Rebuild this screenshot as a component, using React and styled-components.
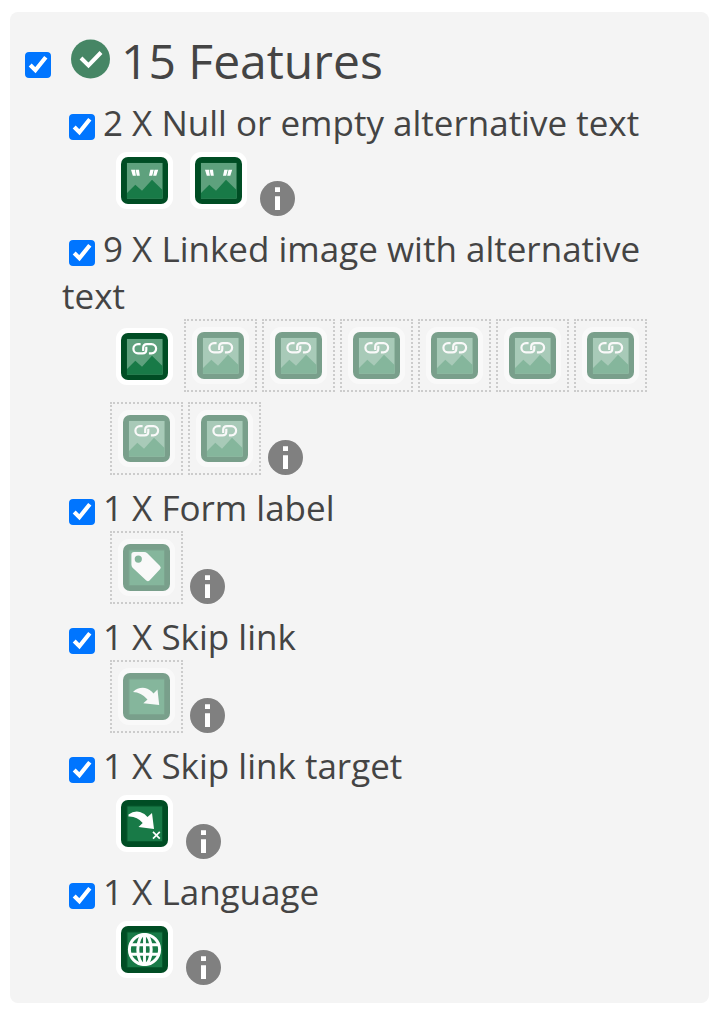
import React from "react";
import styled, { createGlobalStyle } from "styled-components";

const GlobalStyle = createGlobalStyle`
  * { box-sizing: border-box; }
  body {
    margin: 0;
    background: #fff;
    color: #444;
    font-family: "Open Sans", "Liberation Sans", sans-serif;
    font-size: 35px;
    line-height: 47px;
  }
`;

const Panel = styled.section`
  margin: 12px 7px 6px 10px;
  padding: 15px 14px 9px 15px;
  background: #f4f4f4;
  border-radius: 8px;
`;

const Heading = styled.h3`
  margin: 0 0 4px;
  font-size: 48px;
  font-weight: 400;
  line-height: 68px;
`;

const Checkbox = styled.input`
  width: 26px;
  height: 26px;
  margin: 0;
  vertical-align: ${(p) => (p.$heading ? "1px" : "-4px")};
  margin-left: ${(p) => (p.$heading ? "0" : "7px")};
  margin-right: ${(p) => (p.$heading ? "20px" : "8px")};
  clip-path: inset(0 round 4px);
`;

const StatusIcon = styled.svg`
  width: 40px;
  height: 40px;
  margin-right: 10px;
  vertical-align: 0;
`;

const Types = styled.ul`
  margin: 0;
  padding: 0 0 0 37px;
  list-style: none;
`;

const TypeLabel = styled.label`
  display: block;
`;

const Icons = styled.div`
  display: flex;
  flex-wrap: wrap;
  align-items: flex-end;
  gap: 10px 5px;
  padding: 0 0 9px 48px;
`;

const IconButton = styled.button`
  display: block;
  padding: ${(p) => (p.$hidden ? "6px" : "6px 6px 7px")};
  border: ${(p) => (p.$hidden ? "2px dotted #ccc" : "0")};
  background: none;
  cursor: pointer;
`;

const TileSvg = styled.svg`
  display: block;
  width: 57px;
  height: 57px;
  opacity: ${(p) => (p.$hidden ? 0.5 : 1)};
`;

const InfoButton = styled.button`
  display: block;
  width: 35px;
  height: 35px;
  margin-left: 2px;
  padding: 0;
  border: 0;
  background: none;
  cursor: pointer;
`;

const Landscape = () => (
  <>
    <path d="M11 11H46.500V46.500H11Z" fill="#5ea17d" />
    <path d="M11 41L19.300 32.700L26 38.700L36 27.700L46.500 38V46.500H11Z" fill="#187a47" />
  </>
);

const glyphs = {
  nullAlt: (
    <>
      <Landscape />
      <path
        d="M15 17.700H19L19.900 23.700H16.800ZM19.600 17.700H23L23.800 23.700H20.800ZM34.300 17.700H37.800L36.200 23.700H33ZM38.500 17.700H42.200L40.300 23.700H37.200Z"
        fill="#fff"
      />
    </>
  ),
  linkedImage: (
    <>
      <Landscape />
      <path
        d="M23.500 16.200H22a4.600 4.600 0 0 0 0 9.200H26.500Q30.300 25.400 30.300 21.800V19.800M34 25.400H35.500a4.600 4.600 0 0 0 0-9.200H31Q27.200 16.200 27.200 19.800V21.800"
        fill="none"
        stroke="#fff"
        strokeWidth="2.200"
        strokeLinecap="square"
      />
    </>
  ),
  label: (
    <path
      fillRule="evenodd"
      d="M16 13H26Q28 13 29.300 14.300L42 27Q43.600 28.700 42 30.300L31.500 41.500Q30 43 28.300 41.500L14.600 28.700Q13.400 27.500 13.400 25.500V15.500Q13.400 13 16 13ZM20.300 16.500a3.600 3.600 0 1 0 0 7.200a3.600 3.600 0 1 0 0-7.200Z"
      fill="#fff"
    />
  ),
  skip: (
    <path
      d="M15 24Q20 19 27 20Q32 21 35.500 25.500L39.500 21.500L41.200 37L25.300 35.300L29.500 31.500Q23 24 15 24Z"
      fill="#fff"
    />
  ),
  skipTarget: (
    <>
      <path
        d="M12.500 19.500Q18 15.500 24 17Q29 18.500 31.500 22L36 18L38 34L22.500 32L26.700 28Q21 21 12.500 21.500Z"
        fill="#fff"
      />
      <path d="M37 36.800L43.800 43.600M43.800 36.800L37 43.600" stroke="#fff" strokeWidth="1.700" />
    </>
  ),
  language: (
    <g fill="none" stroke="#fff" strokeWidth="3">
      <circle cx="28.500" cy="28.500" r="15.100" />
      <ellipse cx="28.500" cy="28.500" rx="6.700" ry="15.100" />
      <path d="M28.500 13.300V43.700M14.500 23.700H42.500M14.500 33.300H42.500" strokeWidth="2.900" />
    </g>
  ),
};

const Tile = ({ kind, hidden, name }) => (
  <IconButton type="button" $hidden={hidden} aria-label={name}>
    <TileSvg viewBox="0 0 57 57" $hidden={hidden} aria-hidden="true">
      <rect width="57" height="57" rx="11" fill="#fff" />
      <rect x="5" y="5" width="47" height="47" rx="7" fill="#004d24" />
      <rect x="10.500" y="10.500" width="36.500" height="36.500" rx="1" fill="#06592d" />
      <rect x="11.500" y="11.500" width="34.500" height="34.500" fill="#187a47" />
      {glyphs[kind]}
    </TileSvg>
  </IconButton>
);

const Info = ({ name }) => (
  <InfoButton type="button" aria-label={`${name} information`}>
    <svg width="35" height="35" viewBox="0 0 35 35" aria-hidden="true">
      <circle cx="17.500" cy="17.500" r="17.500" fill="#808080" />
      <path d="M15 6.300H20V11H15ZM15 15.300H20V29H15Z" fill="#fff" />
    </svg>
  </InfoButton>
);

const features = [
  { name: "Null or empty alternative text", kind: "nullAlt", hidden: [false, false] },
  {
    name: "Linked image with alternative text",
    kind: "linkedImage",
    hidden: [false, true, true, true, true, true, true, true, true],
  },
  { name: "Form label", kind: "label", hidden: [true] },
  { name: "Skip link", kind: "skip", hidden: [true] },
  { name: "Skip link target", kind: "skipTarget", hidden: [false] },
  { name: "Language", kind: "language", hidden: [false] },
];

export default function App() {
  return (
    <>
      <GlobalStyle />
      <Panel>
        <Heading>
          <Checkbox id="all-features" type="checkbox" defaultChecked $heading />
          <label htmlFor="all-features">
            <StatusIcon viewBox="0 0 40 40" aria-hidden="true">
              <circle cx="19.500" cy="20" r="19.500" fill="#468665" />
              <path d="M10 19L17.500 26.500L30 13.500" fill="none" stroke="#fff" strokeWidth="4" />
            </StatusIcon>
            15 Features
          </label>
        </Heading>
        <Types>
          {features.map(({ name, kind, hidden }) => (
            <li key={kind}>
              <TypeLabel>
                <Checkbox type="checkbox" defaultChecked />
                {`${hidden.length} X ${name}`}
              </TypeLabel>
              <Icons>
                {hidden.map((h, i) => (
                  <Tile key={i} kind={kind} hidden={h} name={name} />
                ))}
                <Info name={name} />
              </Icons>
            </li>
          ))}
        </Types>
      </Panel>
    </>
  );
}
